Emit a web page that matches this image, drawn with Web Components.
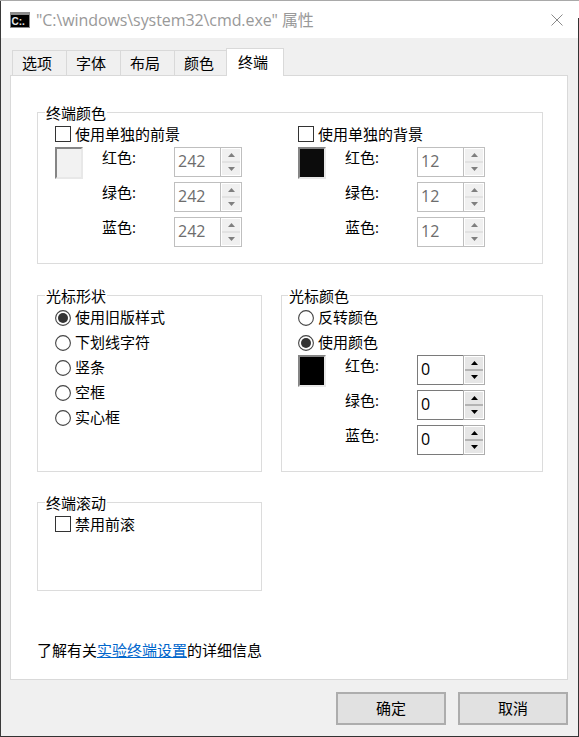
<!DOCTYPE html>
<html lang="zh-CN">
<head>
<meta charset="utf-8">
<title>属性</title>
<style>
html,body{margin:0;padding:0;background:#f0f0f0}
body{font:15px/20px "Open Sans","Noto Sans CJK SC",sans-serif;color:#000}
</style>
</head>
<body>
<win-dialog>
  <span slot="title">"C:\windows\system32\cmd.exe" 属性</span>
  <win-tab slot="tabs">选项</win-tab>
  <win-tab slot="tabs">字体</win-tab>
  <win-tab slot="tabs">布局</win-tab>
  <win-tab slot="tabs">颜色</win-tab>
  <win-tab slot="tabs" active>终端</win-tab>

  <win-panel>
    <win-group legend="终端颜色" class="wide">
      <win-columns>
        <div>
          <win-check>使用单独的前景</win-check>
          <win-color color="#f2f2f2" value="242" disabled></win-color>
        </div>
        <div>
          <win-check>使用单独的背景</win-check>
          <win-color color="#0c0c0c" value="12" disabled></win-color>
        </div>
      </win-columns>
    </win-group>

    <win-group legend="光标形状">
      <win-radio checked>使用旧版样式</win-radio>
      <win-radio>下划线字符</win-radio>
      <win-radio>竖条</win-radio>
      <win-radio>空框</win-radio>
      <win-radio>实心框</win-radio>
    </win-group>

    <win-group legend="光标颜色" narrow>
      <win-radio>反转颜色</win-radio>
      <win-radio checked>使用颜色</win-radio>
      <win-color color="#000000" value="0"></win-color>
    </win-group>

    <win-group legend="终端滚动">
      <win-check>禁用前滚</win-check>
    </win-group>

    <win-note slot="note">了解有关<a>实验终端设置</a>的详细信息</win-note>
  </win-panel>

  <win-button slot="footer">确定</win-button>
  <win-button slot="footer">取消</win-button>
</win-dialog>

<script>
function shadow(el, html){
  el.attachShadow({mode:'open'}).innerHTML = html;
}

customElements.define('win-dialog', class extends HTMLElement{
  connectedCallback(){
    if(this.shadowRoot) return;
    shadow(this, `<style>
      :host{display:flex;flex-direction:column;box-sizing:border-box;width:579px;height:737px;
        padding:1px;
        background:
          linear-gradient(#a9a9a9,#a9a9a9) left top/100% 1px no-repeat,
          linear-gradient(#fff 18px,#333 18px) right top/1px 100% no-repeat,
          linear-gradient(#3a3a3a,#3a3a3a) left top/1px 100% no-repeat,
          linear-gradient(#333,#333) left bottom/100% 1px no-repeat,
          #f0f0f0;}
      header{flex:none;height:37px;background:#fff;display:flex;align-items:center;
        box-sizing:border-box;padding:0 15px 0 9px;color:#999;font-size:16px;}
      header svg.icon{flex:none;margin-right:6px}
      header .t{flex:1;white-space:nowrap;letter-spacing:-.08px}
      nav{flex:none;display:flex;align-items:flex-end;height:37px;padding-left:11px}
      .body{flex:none;margin-left:9px;width:558px;height:605px;box-sizing:border-box;
        border:1px solid #d9d9d9;background:#fff}
      footer{flex:1;display:flex;justify-content:flex-end;align-items:flex-start;gap:12px;
        padding:12px 10px 0 0}
    </style>
    <header>
      <svg class="icon" width="20" height="16" viewBox="0 0 20 16">
        <rect width="20" height="16" fill="#8c8c8c"/>
        <rect x="1" y="3" width="18" height="12" fill="#000"/>
        <text x="1.500" y="13" font-family="Liberation Sans" font-weight="700" font-size="10" fill="#e8e8e8">C:\.</text>
      </svg>
      <span class="t"><slot name="title"></slot></span>
      <svg width="12" height="12" viewBox="0 0 12 12" fill="none" stroke="#8a8a8a" stroke-width="1"><path d="M.5.5l11 11M11.500.5l-11 11"/></svg>
    </header>
    <nav><slot name="tabs"></slot></nav>
    <div class="body"><slot></slot></div>
    <footer><slot name="footer"></slot></footer>`);
  }
});

customElements.define('win-tab', class extends HTMLElement{
  connectedCallback(){
    if(this.shadowRoot) return;
    shadow(this, `<style>
      :host{display:block;box-sizing:border-box;height:25px;width:55px;margin-right:-1px;
        padding:2px 0 0 9px;border:1px solid #d9d9d9;border-bottom:none;background:#f0f0f0;white-space:nowrap}
      :host([active]){position:relative;z-index:1;height:28px;width:58px;margin:0 0 -1px -2px;
        padding:3px 0 0 11px;background:#fff}
    </style><slot></slot>`);
  }
});

customElements.define('win-panel', class extends HTMLElement{
  connectedCallback(){
    if(this.shadowRoot) return;
    shadow(this, `<style>
      :host{display:grid;grid-template-columns:225px 262px;column-gap:19px;
        grid-template-rows:153px 177px 89px auto;row-gap:30px;
        padding:36px 0 0 26px}
      ::slotted(.wide){grid-column:1 / 3;margin-bottom:1px}
      ::slotted(win-note){grid-column:1 / 3;margin-top:19px}
    </style><slot></slot><slot name="note"></slot>`);
  }
});

customElements.define('win-group', class extends HTMLElement{
  connectedCallback(){
    if(this.shadowRoot) return;
    shadow(this, `<style>
      :host{display:block;box-sizing:border-box;border:1px solid #dcdcdc;padding:0 0 0 17px;min-width:0}
      :host([narrow]){padding-left:16px}
      .legend{display:block;width:fit-content;height:16px;line-height:16px;margin:-8px 0 0 -10px;
        padding:0 1px;background:#fff;white-space:nowrap}
      .content{display:block}
    </style><span class="legend"></span><div class="content"><slot></slot></div>`);
    this.shadowRoot.querySelector('.legend').textContent = this.getAttribute('legend');
  }
});

customElements.define('win-columns', class extends HTMLElement{
  connectedCallback(){
    if(this.shadowRoot) return;
    shadow(this, `<style>:host{display:grid;grid-template-columns:243px 1fr}</style><slot></slot>`);
  }
});

customElements.define('win-check', class extends HTMLElement{
  connectedCallback(){
    if(this.shadowRoot) return;
    shadow(this, `<style>
      :host{display:flex;align-items:center;height:26px;white-space:nowrap}
      i{flex:none;box-sizing:border-box;width:16px;height:16px;border:1px solid #333;background:#fff;margin-right:4px}
    </style><i></i><slot></slot>`);
  }
});

customElements.define('win-radio', class extends HTMLElement{
  connectedCallback(){
    if(this.shadowRoot) return;
    const dot = this.hasAttribute('checked') ? '<circle cx="8" cy="8" r="5" fill="#333"/>' : '';
    shadow(this, `<style>
      :host{display:flex;align-items:center;height:25px;white-space:nowrap}
      :host(:first-child){margin-top:1px}
      svg{flex:none;margin-right:4px}
      .t{display:block;margin-top:-2px}
    </style><svg width="16" height="16" viewBox="0 0 16 16"><circle cx="8" cy="8" r="7.4" fill="#fff" stroke="#444" stroke-width="1.1"/>${dot}</svg><span class="t"><slot></slot></span>`);
  }
});

customElements.define('win-spin', class extends HTMLElement{
  connectedCallback(){
    if(this.shadowRoot) return;
    shadow(this, `<style>
      :host{display:flex;box-sizing:border-box;width:68px;height:30px;font-size:16px;background:#fff}
      .v{flex:1;box-sizing:border-box;border:1px solid #7a7a7a;border-right:none;padding:0 0 2px 3px;
        display:flex;align-items:center;color:#000}
      .s{flex:none;width:22px;box-sizing:border-box;display:flex;flex-direction:column;
        border:1px solid #adadad;padding:1px;gap:2px;
        background:linear-gradient(#fff,#fff) left top/100% 1px no-repeat,
                   linear-gradient(#fff,#fff) left bottom/100% 1px no-repeat,
                   linear-gradient(#fff,#fff) left top/1px 100% no-repeat,
                   linear-gradient(#fff,#fff) right top/1px 100% no-repeat,
                   var(--sep,#b4b4b4)}
      .b{flex:1;background:#e6e6e6;display:flex;align-items:center;justify-content:center;min-height:0}
      svg{fill:#000;display:block}
      :host([disabled]) .v{border-color:#bfbfbf;color:#6d6d6d}
      :host([disabled]) .s{border-color:#bfbfbf;--sep:#e2e2e2}
      :host([disabled]) .b{background:#f0f0f0}
      :host([disabled]) svg{fill:#7f7f7f}
    </style>
    <div class="v"></div>
    <div class="s">
      <div class="b"><svg width="7" height="4" viewBox="0 0 7 4"><path d="M3.500 0L7 4H0z"/></svg></div>
      <div class="b"><svg width="7" height="4" viewBox="0 0 7 4"><path d="M0 0h7L3.500 4z"/></svg></div>
    </div>`);
    this.shadowRoot.querySelector('.v').textContent = this.getAttribute('value');
  }
});

customElements.define('win-color', class extends HTMLElement{
  connectedCallback(){
    if(this.shadowRoot) return;
    const dis = this.hasAttribute('disabled') ? 'disabled' : '';
    const v = this.getAttribute('value');
    shadow(this, `<style>
      :host{display:flex;align-items:flex-start}
      .sw{flex:none;box-sizing:border-box;width:28px;height:32px;margin-right:19px;
        border:2px solid;border-color:#858585 #e8e8e8 #e8e8e8 #858585;background:var(--c)}
      .g{display:grid;grid-template-columns:72px 68px;row-gap:5px}
      .l{line-height:20px;white-space:nowrap}
    </style>
    <div class="sw" style="--c:${this.getAttribute('color')}"></div>
    <div class="g">
      <span class="l">红色:</span><win-spin value="${v}" ${dis}></win-spin>
      <span class="l">绿色:</span><win-spin value="${v}" ${dis}></win-spin>
      <span class="l">蓝色:</span><win-spin value="${v}" ${dis}></win-spin>
    </div>`);
  }
});

customElements.define('win-note', class extends HTMLElement{
  connectedCallback(){
    if(this.shadowRoot) return;
    shadow(this, `<style>
      :host{display:block;white-space:nowrap}
      ::slotted(a){color:#0066cc;text-decoration:underline}
    </style><slot></slot>`);
  }
});

customElements.define('win-button', class extends HTMLElement{
  connectedCallback(){
    if(this.shadowRoot) return;
    shadow(this, `<style>
      :host{display:flex;align-items:center;justify-content:center;box-sizing:border-box;
        width:110px;height:33px;border:2px solid #adadad;background:#e1e1e1;padding-bottom:1px}
    </style><slot></slot>`);
  }
});
</script>
</body>
</html>
